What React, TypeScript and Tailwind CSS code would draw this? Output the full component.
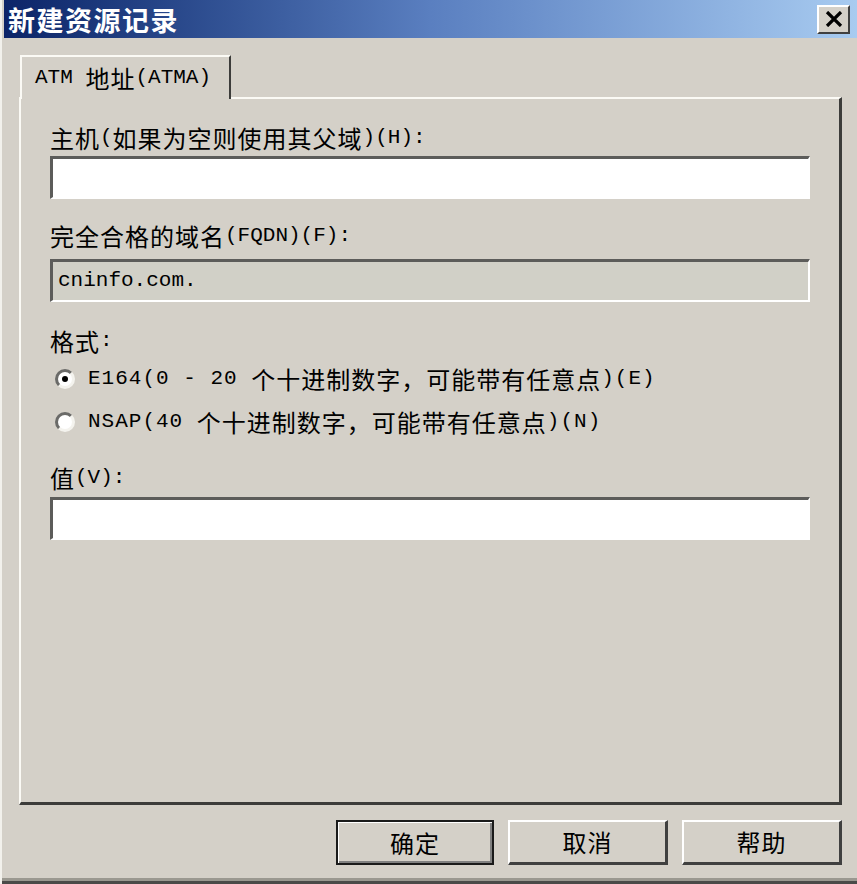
import React from "react";

const CJK_RE = /([\u3000-\u303f\u4e00-\u9fff\uff00-\uffef]+)/;

function Mixed({ text, wide }: { text: string; wide?: boolean }) {
  const parts = text.split(CJK_RE).filter((p) => p.length > 0);
  return (
    <>
      {parts.map((p, i) =>
        CJK_RE.test(p) ? (
          <span
            key={i}
            className="font-['Noto_Sans_CJK_SC',sans-serif] text-[24px] tracking-[1px]"
          >
            {p}
          </span>
        ) : (
          <span
            key={i}
            className={`font-['Liberation_Mono','DejaVu_Sans_Mono',monospace] text-[21px] whitespace-pre ${
              wide ? "tracking-[1px]" : ""
            }`}
          >
            {p}
          </span>
        )
      )}
    </>
  );
}

function Label({ text, className = "" }: { text: string; className?: string }) {
  return (
    <div className={`h-[30px] leading-[30px] flex items-center text-black ${className}`}>
      <Mixed text={text} />
    </div>
  );
}

function Field({
  value,
  readOnly,
  className = "",
}: {
  value?: string;
  readOnly?: boolean;
  className?: string;
}) {
  return (
    <div
      className={`h-[43px] w-full border-t-[3px] border-l-[3px] border-b-2 border-r-2 border-t-[#5c5c5a] border-l-[#5c5c5a] border-b-white border-r-white flex items-center pl-[5px] ${
        readOnly ? "bg-[#d1d0c7]" : "bg-white"
      } ${className}`}
    >
      {value && (
        <span className="font-['Liberation_Mono','DejaVu_Sans_Mono',monospace] text-[21px] text-black">
          {value}
        </span>
      )}
    </div>
  );
}

function Radio({ checked, text, className = "" }: { checked?: boolean; text: string; className?: string }) {
  return (
    <div className={`h-[30px] flex items-center ${className}`}>
      <div className="w-[20px] h-[20px] rounded-full bg-white border-[3px] border-t-[#6a6a68] border-l-[#6a6a68] border-b-[#f4f3ee] border-r-[#f4f3ee] shrink-0 flex items-center justify-center">
        {checked && <div className="w-[6px] h-[6px] rounded-full bg-black" />}
      </div>
      <div className="ml-[13px] text-black flex items-center">
        <Mixed text={text} wide />
      </div>
    </div>
  );
}

function Button({ text, isDefault }: { text: string; isDefault?: boolean }) {
  return (
    <div
      className={`h-[45px] flex items-center justify-center bg-[#d4d0c8] ${
        isDefault
          ? "w-[158px] border-2 border-[#1a1a1a] shadow-[inset_1px_1px_0_#ffffff,inset_-2px_-2px_0_#808080]"
          : "w-[160px] border-t-2 border-l-2 border-b-[3px] border-r-[3px] border-t-white border-l-white border-b-[#404040] border-r-[#404040]"
      }`}
    >
      <span className="font-['Noto_Sans_CJK_SC',sans-serif] text-[24px] tracking-[1px] text-black">
        {text}
      </span>
    </div>
  );
}

export default function App() {
  return (
    <div className="w-[857px] h-[884px] bg-[#d4d0c8] flex flex-col pl-[4px] overflow-hidden shadow-[inset_2px_0_0_#f2f1ec,inset_0_-3px_0_#4a4a48,inset_0_-6px_0_#9a9890]">
      {/* Title bar */}
      <div className="h-[38px] shrink-0 flex items-center justify-between bg-gradient-to-r from-[#0c2468] via-[#5a7fc0] to-[#a8cbf0] pl-[4px] pr-[7px]">
        <span className="font-['Noto_Sans_CJK_SC',sans-serif] font-bold text-[27px] tracking-[1.5px] text-white leading-none">
          新建资源记录
        </span>
        <div className="w-[33px] h-[29px] bg-[#d4d0c8] border-t-2 border-l-2 border-b-2 border-r-2 border-t-white border-l-white border-b-[#404040] border-r-[#404040] flex items-center justify-center">
          <svg width="18" height="16" viewBox="0 0 18 16">
            <path d="M2 1 L16 15 M16 1 L2 15" stroke="#000" strokeWidth="3.2" />
          </svg>
        </div>
      </div>

      {/* Body */}
      <div className="flex flex-col pl-[15px] pr-[15px]">
        {/* Tab */}
        <div className="mt-[17px] flex relative z-10">
          <div className="w-[211px] h-[44px] ml-[1px] bg-[#d4d0c8] border-t-2 border-l-2 border-r-2 border-t-[#fbfaf5] border-l-[#fbfaf5] border-r-[#3c3c3a] flex items-center pl-[13px] -mb-[2px]">
            <Mixed text="ATM 地址(ATMA)" />
          </div>
        </div>

        {/* Panel */}
        <div className="h-[708px] border-t-2 border-l-2 border-t-[#fbfaf5] border-l-[#fbfaf5] border-r-[3px] border-b-[3px] border-r-[#3c3c3a] border-b-[#3c3c3a] flex flex-col pl-[29px] pr-[29px]">
          <Label text="主机(如果为空则使用其父域)(H):" className="mt-[24px]" />
          <Field className="mt-[3px]" />
          <Label text="完全合格的域名(FQDN)(F):" className="mt-[22px]" />
          <Field className="mt-[8px] h-[42px]" readOnly value="cninfo.com." />
          <Label text="格式:" className="mt-[24px]" />
          <Radio checked text="E164(0 - 20 个十进制数字，可能带有任意点)(E)" className="mt-[8px] ml-[5px]" />
          <Radio text="NSAP(40 个十进制数字，可能带有任意点)(N)" className="mt-[13px] ml-[5px]" />
          <Label text="值(V):" className="mt-[26px]" />
          <Field className="mt-[4px]" />
        </div>

        {/* Buttons */}
        <div className="mt-[15px] flex justify-end gap-[14px]">
          <Button text="确定" isDefault />
          <Button text="取消" />
          <Button text="帮助" />
        </div>
      </div>
    </div>
  );
}
